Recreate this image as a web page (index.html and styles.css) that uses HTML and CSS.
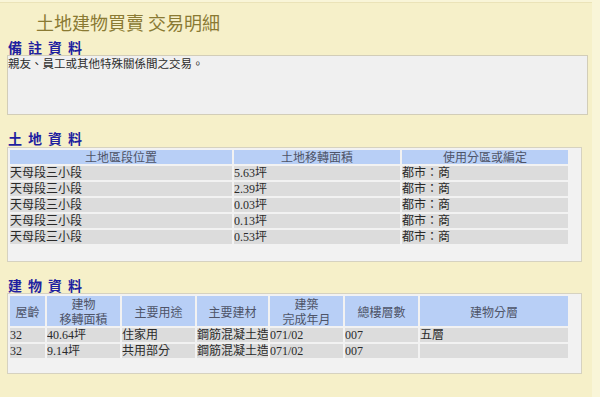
FILE: index.html
```html
<!DOCTYPE html>
<html lang="zh-Hant">
<head>
<meta charset="utf-8">
<title>土地建物買賣 交易明細</title>
<link rel="stylesheet" href="styles.css">
</head>
<body>
<div class="page">
  <h1 class="title">土地建物買賣 交易明細</h1>

  <h2 class="heading">備註資料</h2>
  <div class="remark">親友、員工或其他特殊關係間之交易。</div>

  <h2 class="heading heading-land">土地資料</h2>
  <div class="panel panel-land">
    <table class="grid">
      <colgroup><col class="c-loc"><col class="c-area"><col class="c-zone"></colgroup>
      <thead>
        <tr><th>土地區段位置</th><th>土地移轉面積</th><th>使用分區或編定</th></tr>
      </thead>
      <tbody>
        <tr><td>天母段三小段</td><td>5.63坪</td><td>都市：商</td></tr>
        <tr><td>天母段三小段</td><td>2.39坪</td><td>都市：商</td></tr>
        <tr><td>天母段三小段</td><td>0.03坪</td><td>都市：商</td></tr>
        <tr><td>天母段三小段</td><td>0.13坪</td><td>都市：商</td></tr>
        <tr><td>天母段三小段</td><td>0.53坪</td><td>都市：商</td></tr>
      </tbody>
    </table>
  </div>

  <h2 class="heading heading-bldg">建物資料</h2>
  <div class="panel panel-bldg">
    <table class="grid grid-bldg">
      <colgroup>
        <col class="b-age"><col class="b-area"><col class="b-use"><col class="b-mat">
        <col class="b-date"><col class="b-floors"><col class="b-level">
      </colgroup>
      <thead>
        <tr><th>屋齡</th><th>建物<br>移轉面積</th><th>主要用途</th><th>主要建材</th><th>建築<br>完成年月</th><th>總樓層數</th><th>建物分層</th></tr>
      </thead>
      <tbody>
        <tr><td>32</td><td>40.64坪</td><td>住家用</td><td>鋼筋混凝土造</td><td>071/02</td><td>007</td><td>五層</td></tr>
        <tr><td>32</td><td>9.14坪</td><td>共用部分</td><td>鋼筋混凝土造</td><td>071/02</td><td>007</td><td></td></tr>
      </tbody>
    </table>
  </div>
</div>
</body>
</html>
```

FILE: styles.css
```css
html, body {
  margin: 0;
  padding: 0;
  background: #f9f5d8;
}

body {
  font-family: "Liberation Serif", "Noto Sans CJK TC", serif;
  font-size: 12px;
  color: #2a2a2a;
}

.page {
  width: 592px;
  height: 397px;
  background: #f6f0c9;
  border-top: 1px solid #ebe3b8;
  margin-top: 2px;
  box-sizing: border-box;
  overflow: hidden;
}

.title {
  margin: 0;
  padding: 7px 0 0 36px;
  height: 29px;
  font-family: "Noto Sans CJK TC", sans-serif;
  font-size: 18px;
  font-weight: normal;
  line-height: 24px;
  color: #8a7a33;
}

.heading {
  margin: 0;
  padding-left: 8px;
  font-family: "Noto Sans CJK TC", sans-serif;
  font-size: 14px;
  font-weight: bold;
  line-height: 16px;
  height: 16px;
  letter-spacing: 6px;
  color: #1f1fa0;
}

.remark {
  margin: 0 4px 0 7px;
  height: 58px;
  background: #f0f0f0;
  border: 1px solid #d2cdb8;
  font-family: "Noto Sans CJK TC", sans-serif;
  font-size: 11.5px;
  line-height: 14px;
  color: #2a2a2a;
}

.heading-land {
  margin-top: 15px;
}

.heading-bldg {
  margin-top: 15px;
}

.panel {
  margin: 0 10px 0 7px;
  background: #f2f2f2;
  border: 1px solid #d6d2c0;
}

.panel-land {
  margin-top: 1px;
  padding-bottom: 15px;
}

.panel-bldg {
  padding-bottom: 13px;
}

.grid {
  border-collapse: separate;
  border-spacing: 2px;
  width: 562px;
  table-layout: fixed;
}

.grid th,
.grid td {
  padding: 0;
  height: 14px;
  line-height: 14px;
  white-space: nowrap;
}

.grid th {
  background: #b8cff6;
  font-family: "Noto Sans CJK TC", sans-serif;
  font-weight: normal;
  color: #4e5468;
  text-align: center;
}

.grid td {
  background: #dcdcdc;
  color: #2a2a2a;
  text-align: left;
  overflow: hidden;
}

.c-loc { width: 222px; }
.c-area { width: 166px; }
.c-zone { width: 166px; }

.grid-bldg th {
  height: 30px;
  line-height: 15px;
}

.b-age { width: 35px; }
.b-area { width: 73px; }
.b-use { width: 73px; }
.b-mat { width: 71px; }
.b-date { width: 73px; }
.b-floors { width: 73px; }
.b-level { width: 148px; }
```
